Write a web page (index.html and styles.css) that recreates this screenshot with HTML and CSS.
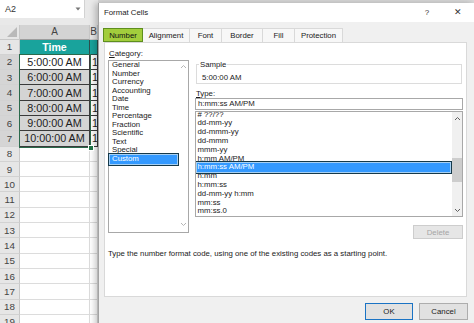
FILE: index.html
```html
<!DOCTYPE html>
<html>
<head>
<meta charset="utf-8">
<link rel="stylesheet" href="styles.css">
</head>
<body>
<div class="screen">
  <div class="sheet">
    <div class="namebar">
      <div class="namebox"><span>A2</span><svg class="caret" width="6" height="4" viewBox="0 0 6 4"><polygon points="0.5,0.5 5.5,0.5 3,3.5" fill="#777"/></svg></div>
    </div>
    <div class="grid">
      <div class="corner"><svg width="12" height="11" viewBox="0 0 12 11"><polygon points="11,0 11,10 1,10" fill="#b9b9b9"/></svg></div>
      <div class="colh sel">A</div>
      <div class="colh">B</div>

      <div class="rh">1</div><div class="c teal">Time</div><div class="c teal b"></div>

      <div class="range">
        <div class="c tb">5:00:00 AM</div>
        <div class="c tb tint">6:00:00 AM</div>
        <div class="c tb tint">7:00:00 AM</div>
        <div class="c tb tint">8:00:00 AM</div>
        <div class="c tb tint">9:00:00 AM</div>
        <div class="c tb tint">10:00:00 AM</div>
        <span class="handle"></span>
      </div>

      <div class="rh sel">2</div><div class="c tb b">1</div>
      <div class="rh sel">3</div><div class="c tb b">1</div>
      <div class="rh sel">4</div><div class="c tb b">1</div>
      <div class="rh sel">5</div><div class="c tb b">1</div>
      <div class="rh sel">6</div><div class="c tb b">1</div>
      <div class="rh sel">7</div><div class="c tb b">1</div>
      <div class="rh">8</div><div class="c"></div><div class="c b"></div>
      <div class="rh">9</div><div class="c"></div><div class="c b"></div>
      <div class="rh">10</div><div class="c"></div><div class="c b"></div>
      <div class="rh">11</div><div class="c"></div><div class="c b"></div>
      <div class="rh">12</div><div class="c"></div><div class="c b"></div>
      <div class="rh">13</div><div class="c"></div><div class="c b"></div>
      <div class="rh">14</div><div class="c"></div><div class="c b"></div>
      <div class="rh">15</div><div class="c"></div><div class="c b"></div>
      <div class="rh">16</div><div class="c"></div><div class="c b"></div>
      <div class="rh">17</div><div class="c"></div><div class="c b"></div>
      <div class="rh">18</div><div class="c"></div><div class="c b"></div>
      <div class="rh">19</div><div class="c"></div><div class="c b"></div>
    </div>
  </div>

  <div class="dialog">
    <div class="titlebar">
      <span class="title">Format Cells</span>
      <span class="help">?</span>
      <span class="close">&#x2715;</span>
    </div>
    <div class="tabs">
      <span class="tab active w-number">Number</span>
      <span class="tab w-align">Alignment</span>
      <span class="tab w-font">Font</span>
      <span class="tab w-border">Border</span>
      <span class="tab w-fill">Fill</span>
      <span class="tab w-prot">Protection</span>
    </div>
    <div class="panel">
      <div class="cols">
        <div class="catcol">
          <div class="lbl cat-lbl"><u>C</u>ategory:</div>
          <div class="catbox">
            <ul class="catlist">
              <li>General</li>
              <li>Number</li>
              <li>Currency</li>
              <li>Accounting</li>
              <li>Date</li>
              <li>Time</li>
              <li>Percentage</li>
              <li>Fraction</li>
              <li>Scientific</li>
              <li>Text</li>
              <li>Special</li>
              <li class="sel">Custom</li>
            </ul>
            <div class="catscroll">
              <svg width="7" height="5" viewBox="0 0 7 5"><polyline points="1,4 3.5,1.5 6,4" fill="none" stroke="#b5b5b5" stroke-width="1"/></svg>
              <svg width="7" height="5" viewBox="0 0 7 5"><polyline points="1,1 3.5,3.5 6,1" fill="none" stroke="#b5b5b5" stroke-width="1"/></svg>
            </div>
          </div>
        </div>
        <div class="typecol">
          <fieldset class="sample">
            <legend>Sample</legend>
            <div class="sample-val">5:00:00 AM</div>
          </fieldset>
          <div class="lbl type-lbl"><u>T</u>ype:</div>
          <div class="typeinput">h:mm:ss AM/PM</div>
          <div class="typelist">
            <ul class="tlist">
              <li># ??/??</li>
              <li>dd-mm-yy</li>
              <li>dd-mmm-yy</li>
              <li>dd-mmm</li>
              <li>mmm-yy</li>
              <li>h:mm AM/PM</li>
              <li class="sel">h:mm:ss AM/PM</li>
              <li>h:mm</li>
              <li>h:mm:ss</li>
              <li>dd-mm-yy h:mm</li>
              <li>mm:ss</li>
              <li>mm:ss.0</li>
            </ul>
            <div class="sb">
              <div class="arrow"><svg width="7" height="5" viewBox="0 0 7 5"><polyline points="1,4 3.5,1.5 6,4" fill="none" stroke="#606060" stroke-width="1"/></svg></div>
              <div class="track"><div class="thumb"></div></div>
              <div class="arrow"><svg width="7" height="5" viewBox="0 0 7 5"><polyline points="1,1 3.5,3.5 6,1" fill="none" stroke="#606060" stroke-width="1"/></svg></div>
            </div>
          </div>
          <div class="delrow"><button class="btn del">Delete</button></div>
        </div>
      </div>
      <p class="desc">Type the number format code, using one of the existing codes as a starting point.</p>
    </div>
    <div class="footer">
      <button class="btn ok">OK</button>
      <button class="btn cancel">Cancel</button>
    </div>
  </div>
</div>
</body>
</html>
```

FILE: styles.css
```css
* { box-sizing: border-box; margin: 0; padding: 0; }
html, body { width: 474px; height: 323px; overflow: hidden; }
body { background: #d9d9d9; font-family: "Liberation Sans", Arial, sans-serif; }

.screen { display: flex; width: 474px; height: 323px; overflow: hidden; }

/* ---------- spreadsheet ---------- */
.sheet { width: 98px; flex: none; display: flex; flex-direction: column; background: #fff; overflow: hidden; }
.namebar { height: 25px; flex: none; background: #e9e9e9; }
.namebox {
  width: 85px; height: 18px; background: #fff; border-right: 1px solid #d2d2d2;
  display: flex; align-items: center; justify-content: space-between;
  padding: 0 3px 0 5px; font-size: 9px; color: #333;
}
.grid {
  display: grid;
  grid-template-columns: 20px 70px 8px;
  grid-template-rows: 14.5px repeat(19, 15.3px);
}
.corner { background: #e6e6e6; border-right: 1px solid #c8c8c8; border-bottom: 1px solid #c8c8c8; display: flex; align-items: flex-end; justify-content: flex-end; padding: 0 1px 1px 0; }
.colh { background: #e6e6e6; border-right: 1px solid #c8c8c8; border-bottom: 1px solid #c8c8c8; font-size: 10px; color: #444; display: flex; align-items: center; justify-content: center; }
.colh.sel { background: #d3d3d3; border-bottom: 1px solid #9c9c9c; }
.rh { background: #e6e6e6; border-right: 1px solid #c8c8c8; border-bottom: 1px solid #d2d2d2; font-size: 9.8px; color: #444; display: flex; align-items: center; justify-content: center; }
.rh.sel { background: #d5d5d5; color: #3f3f3f; }
.c { border-right: 1px solid #dcdcdc; border-bottom: 1px solid #dcdcdc; font-size: 10.8px; color: #1c1c1c; display: flex; align-items: center; justify-content: center; white-space: nowrap; overflow: hidden; }
.c.b { justify-content: flex-start; padding-left: 2px; }
.c.teal { background: #19a39c; color: #fff; font-weight: bold; font-size: 10.6px; border-right: 1px solid #2f4f4c; border-bottom: 1px solid #2f4f4c; }
.c.tb { border-right: 1px solid #3a3a3a; border-bottom: 1px solid #3a3a3a; }
.c.tint { background: #d4d4d4; }
.range {
  grid-area: 3 / 2 / 9 / 3;
  display: grid; grid-template-rows: repeat(6, 15.3px);
  position: relative;
  outline: 1.5px solid #2b6a4c; outline-offset: -0.5px;
}
.handle { position: absolute; right: -3px; bottom: -3px; width: 4px; height: 4px; background: #217346; outline: 1px solid #fff; }

/* ---------- dialog ---------- */
.dialog {
  flex: 1; margin-top: 3px; height: 330px;
  background: #f0f0f0; border-left: 1px solid #a3a3a3;
  box-shadow: -3px 0 6px rgba(0,0,0,0.22);
  display: flex; flex-direction: column;
  font-size: 7.8px; line-height: 9px; color: #1a1a1a;
}
.titlebar { height: 19px; flex: none; background: #fff; display: flex; align-items: center; padding-left: 5px; }
.title { flex: 1; }
.help { width: 10px; text-align: center; margin-right: 19px; font-size: 8px; color: #333; }
.close { width: 14px; text-align: center; margin-right: 9px; font-size: 8.5px; color: #333; }

.tabs { display: flex; height: 14px; margin: 6px 0 0 4px; flex: none; }
.tab {
  height: 14px; display: flex; align-items: center; justify-content: center;
  background: #f7f7f7; border-top: 1px solid #d9d9d9; border-right: 1px solid #d9d9d9;
}
.tab.active { background: #a2cd3c; border: 1.5px solid #5e8f1d; color: #111; }
.w-number { width: 40px; }
.w-align { width: 47px; }
.w-font { width: 32px; }
.w-border { width: 41px; }
.w-fill { width: 32px; }
.w-prot { width: 48px; }

.panel { flex: none; height: 255px; margin: 0 7px 0 5px; background: #fff; border: 1px solid #d9d9d9; padding: 6px 3px 0 3px; }
.cols { display: flex; gap: 6px; align-items: flex-start; }
.catcol { width: 81px; flex: none; }
.cat-lbl { padding-left: 1px; margin-bottom: 2px; height: 9px; }
.catbox { height: 173px; border: 1px solid #a8a8a8; display: flex; }
.catlist { list-style: none; flex: 1; }
.catlist li { line-height: 8.55px; height: 8.55px; padding-left: 3px; white-space: nowrap; }
.catscroll { width: 9px; flex: none; display: flex; flex-direction: column; justify-content: space-between; align-items: center; padding: 3px 0 5px 0; }

li.sel { position: relative; z-index: 1; color: #fff; }
li.sel::before {
  content: ""; position: absolute; z-index: -1;
  left: -1px; right: 0; top: -2px; bottom: -2px;
  background: #3399ff; border: 1px solid #15394a;
  box-shadow: inset 0 0 0 1px #a7d0f3;
}

.typecol { width: 268px; flex: none; padding-top: 11px; }
.sample { margin: 0 1px; border: 1px solid #dcdcdc; padding: 3.5px 2px 1.5px 2px; }
.sample legend { padding: 0 1px; line-height: 9px; }
.sample-val { padding-left: 3px; line-height: 9px; }
.type-lbl { margin-top: 5px; padding-left: 1px; height: 9px; }
.typeinput { height: 12px; border: 1px solid #a8a8a8; line-height: 10px; padding-left: 2px; }
.typelist { height: 106px; margin-top: 1px; border: 1px solid #a8a8a8; display: flex; overflow: hidden; }
.tlist { list-style: none; flex: 1; margin-top: -1.4px; }
.tlist li { line-height: 8.8px; height: 8.8px; padding-left: 1.5px; white-space: nowrap; }
.sb { width: 10px; flex: none; background: #f0f0f0; display: flex; flex-direction: column; }
.arrow { height: 12px; display: flex; align-items: center; justify-content: center; }
.track { flex: 1; padding-top: 34px; }
.thumb { height: 24px; background: #cdcdcd; }
.delrow { display: flex; justify-content: flex-end; margin-top: 8px; }

.btn { font-family: inherit; font-size: 7.8px; line-height: 9px; color: #1a1a1a; background: #e1e1e1; border: 1px solid #adadad; }
.del { width: 50px; height: 14px; color: #a5a5a5; background: #e6e6e6; border-color: #cdcdcd; }
.desc { margin-top: 10px; line-height: 9px; white-space: nowrap; }

.footer { display: flex; justify-content: flex-end; gap: 6px; padding: 6px 6px 0 0; }
.ok { width: 48px; height: 17px; border: 1.5px solid #1a73c4; }
.cancel { width: 49px; height: 17px; }
```
